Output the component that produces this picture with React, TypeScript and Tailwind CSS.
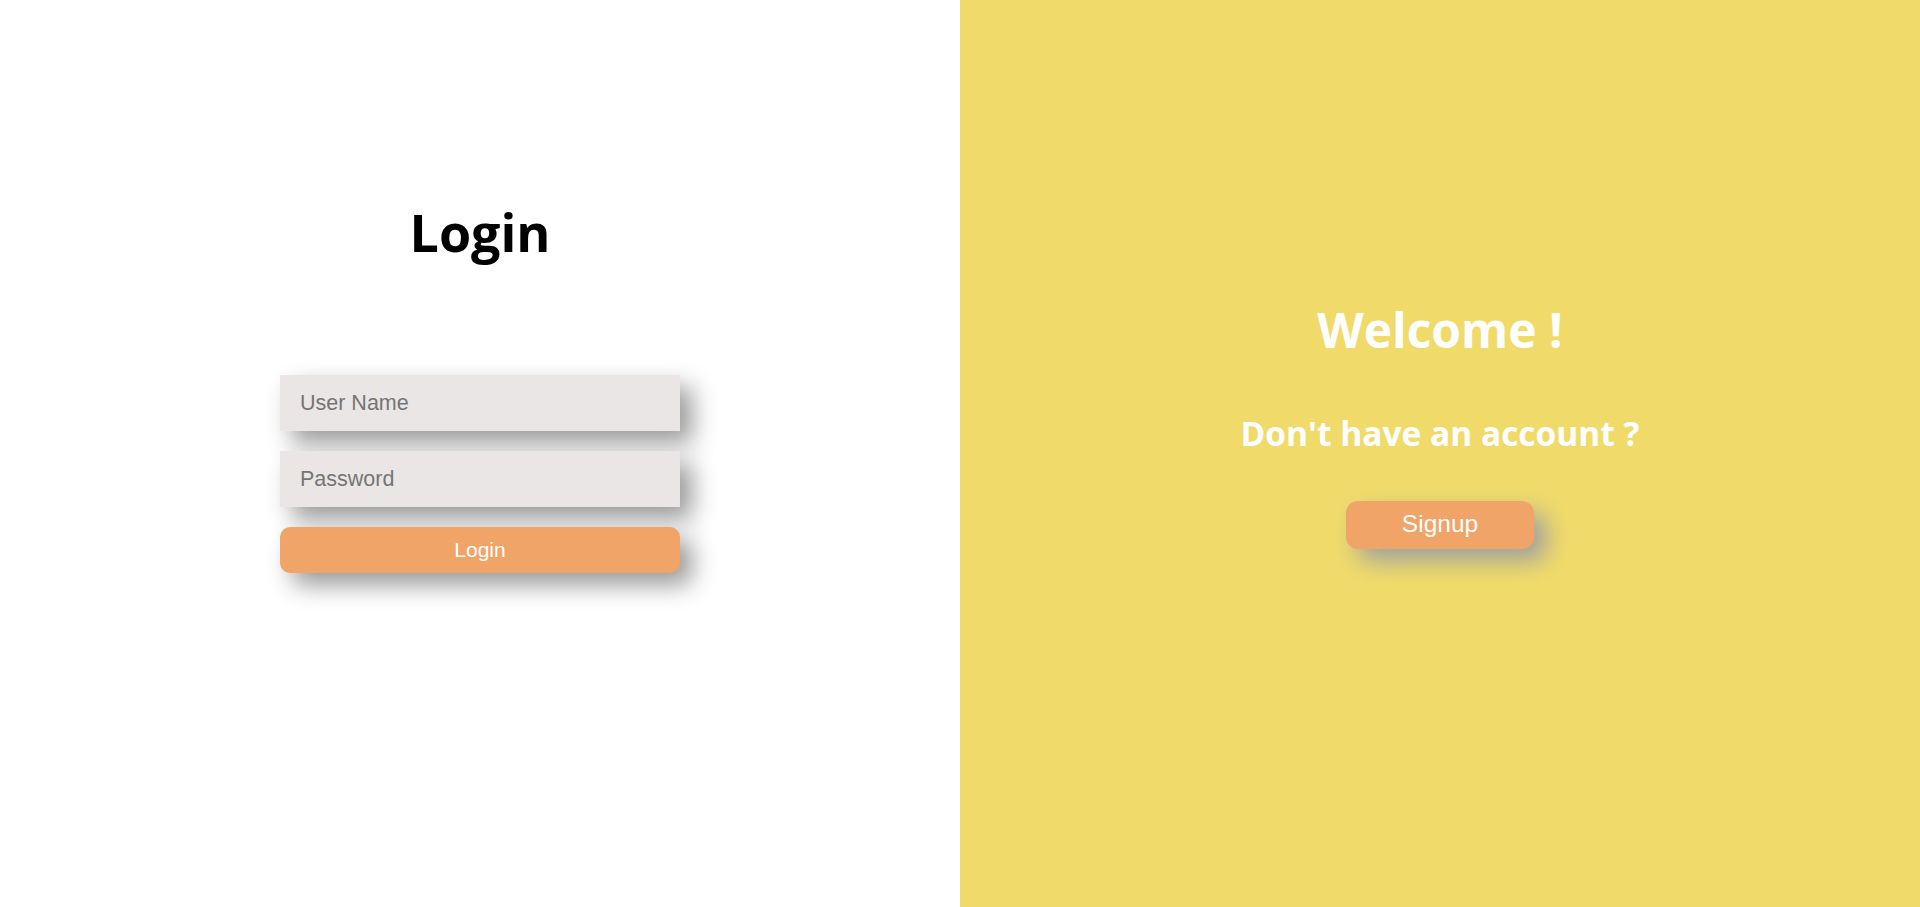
export default function App() {
  return (
    <main className="flex h-screen w-full font-['Liberation_Sans',Arial,sans-serif]">
      {/* Login side */}
      <section className="flex w-1/2 flex-col items-center bg-white pt-[206px]">
        <h1 className="text-[52px] leading-[52px] font-bold text-black font-['Open_Sans','Noto_Sans',sans-serif]">
          Login
        </h1>
        <form className="mt-[117px] flex w-[400px] flex-col gap-5" onSubmit={(e) => e.preventDefault()}>
          <input
            type="text"
            placeholder="User Name"
            className="h-[56px] w-full bg-[#eae6e5] px-5 text-[21.5px] text-black placeholder:text-[#757575] outline-none shadow-[12px_12px_24px_#999999]"
          />
          <input
            type="password"
            placeholder="Password"
            className="h-[56px] w-full bg-[#eae6e5] px-5 text-[21.5px] text-black placeholder:text-[#757575] outline-none shadow-[12px_12px_24px_#999999]"
          />
          <button className="h-[46px] w-full rounded-[10px] bg-[#f0a468] text-[21px] text-white shadow-[12px_12px_24px_#999999]">
            Login
          </button>
        </form>
      </section>

      {/* Signup side */}
      <section className="flex w-1/2 flex-col items-center bg-[#f0db6a] pt-[306px] font-['Open_Sans','Noto_Sans',sans-serif] text-white">
        <h1 className="text-[48px] leading-[48px] font-bold">Welcome !</h1>
        <h2 className="mt-[63px] text-[33.5px] leading-[33.5px] font-bold">Don't have an account ?</h2>
        <button className="mt-[50px] h-[48px] w-[188px] rounded-[12px] bg-[#f0a468] text-[24.5px] text-white font-['Liberation_Sans',Arial,sans-serif] shadow-[12px_12px_24px_#a0a0a0]">
          Signup
        </button>
      </section>
    </main>
  );
}
